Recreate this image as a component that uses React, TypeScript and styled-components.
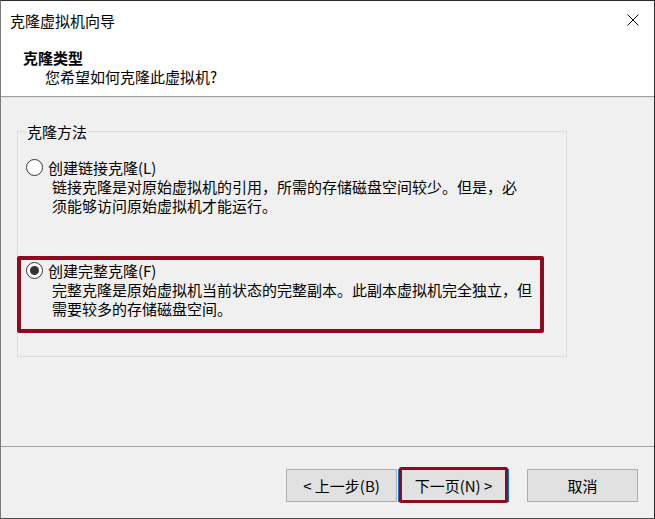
import styled, { createGlobalStyle } from 'styled-components';

const GlobalStyle = createGlobalStyle`
  html, body {
    margin: 0;
    padding: 0;
    background: #ffffff;
  }
  * {
    box-sizing: border-box;
  }
`;

const Window = styled.div`
  width: 655px;
  height: 519px;
  display: flex;
  flex-direction: column;
  background: #f0f0f0;
  border: 1px solid #2b2b2b;
  border-left-color: #7a7a7a;
  border-bottom-color: #4a4a4a;
  color: #000;
  font-family: 'Noto Sans CJK SC', 'Noto Sans', sans-serif;
  font-size: 15px;
  line-height: 19px;
`;

const Header = styled.header`
  height: 96px;
  background: #ffffff;
  border-bottom: 1px solid #a0a0a0;
  box-shadow: 0 1px 0 #e0e0e0;
`;

const TitleBar = styled.div`
  height: 38px;
  display: flex;
  align-items: center;
  justify-content: space-between;
  padding: 0 15px 0 9px;
`;

const CloseIcon = styled.svg`
  width: 12px;
  height: 12px;
  display: block;
`;

const Heading = styled.div`
  padding: 9px 0 0 22px;
  font-weight: bold;
`;

const SubHeading = styled.div`
  padding-left: 44px;
`;

const Body = styled.main`
  flex: 1;
  padding: 25px 0 0 16px;
`;

const GroupBox = styled.fieldset`
  width: 550px;
  height: 235px;
  margin: 0;
  padding: 0;
  border: 1px solid #dcdcdc;
`;

const Legend = styled.legend`
  margin-left: 8px;
  padding: 0 1px;
`;

const Option = styled.div<{ $highlight?: boolean }>`
  ${({ $highlight }) =>
    $highlight
      ? `
    width: 527px;
    margin: 41px 0 0 -1px;
    padding: 1px 0 11px 5px;
    border: 4px solid #8e0b1f;
    border-radius: 2px;
  `
      : `
    margin-top: 17px;
    padding-left: 8px;
  `}
`;

const OptionRow = styled.label`
  display: flex;
  align-items: center;
  gap: 5px;
`;

const Radio = styled.span<{ $checked?: boolean }>`
  width: 17px;
  height: 17px;
  border-radius: 50%;
  border: 1px solid #333333;
  background: #ffffff;
  display: flex;
  align-items: center;
  justify-content: center;

  &::after {
    content: '';
    width: 9px;
    height: 9px;
    border-radius: 50%;
    background: ${({ $checked }) => ($checked ? '#333333' : 'transparent')};
  }
`;

const Description = styled.div`
  padding-left: 26px;
  white-space: nowrap;
`;

const Footer = styled.footer`
  height: 72px;
  display: flex;
  justify-content: flex-end;
  align-items: flex-start;
  padding: 22px 16px 0 0;
  border-top: 1px solid #a0a0a0;
`;

const Button = styled.button<{ $focused?: boolean; $gap?: number }>`
  position: relative;
  width: 111px;
  height: 33px;
  margin: 0 0 0 ${({ $gap }) => $gap ?? 0}px;
  padding: 0;
  background: #e1e1e1;
  border: 1px solid ${({ $focused }) => ($focused ? '#0078d7' : '#adadad')};
  font-family: inherit;
  font-size: 15px;
  line-height: 19px;
  color: #000;

  ${({ $focused }) =>
    $focused &&
    `
    &::after {
      content: '';
      position: absolute;
      top: -3px;
      bottom: -2px;
      left: 0;
      right: 0;
      border: 3px solid #8e0b1f;
      border-radius: 2px;
    }
  `}
`;

export default function App() {
  return (
    <>
      <GlobalStyle />
      <Window>
        <Header>
          <TitleBar>
            <span>克隆虚拟机向导</span>
            <CloseIcon viewBox="0 0 12 12">
              <path d="M0.5 0.5 L11.5 11.5 M11.5 0.5 L0.5 11.5" stroke="#000" strokeWidth="1" />
            </CloseIcon>
          </TitleBar>
          <Heading>克隆类型</Heading>
          <SubHeading>您希望如何克隆此虚拟机?</SubHeading>
        </Header>

        <Body>
          <GroupBox>
            <Legend>克隆方法</Legend>
            <Option>
              <OptionRow>
                <Radio />
                <span>创建链接克隆(L)</span>
              </OptionRow>
              <Description>链接克隆是对原始虚拟机的引用，所需的存储磁盘空间较少。但是，必</Description>
              <Description>须能够访问原始虚拟机才能运行。</Description>
            </Option>
            <Option $highlight>
              <OptionRow>
                <Radio $checked />
                <span>创建完整克隆(F)</span>
              </OptionRow>
              <Description>完整克隆是原始虚拟机当前状态的完整副本。此副本虚拟机完全独立，但</Description>
              <Description>需要较多的存储磁盘空间。</Description>
            </Option>
          </GroupBox>
        </Body>

        <Footer>
          <Button>&lt; 上一步(B)</Button>
          <Button $focused $gap={1}>下一页(N) &gt;</Button>
          <Button $gap={18}>取消</Button>
        </Footer>
      </Window>
    </>
  );
}
